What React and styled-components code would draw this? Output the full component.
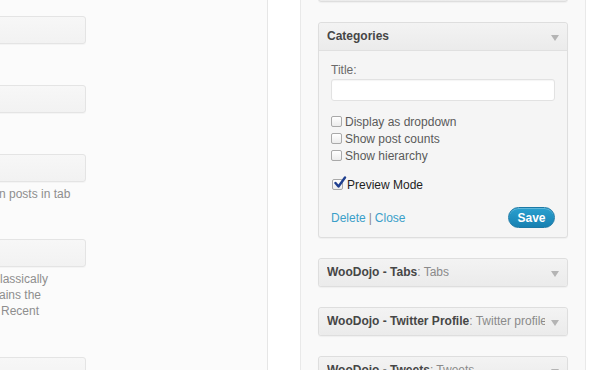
import React from "react"
import styled, { createGlobalStyle } from "styled-components"

const GlobalStyle = createGlobalStyle`
    body {
        margin:0;
        background:#fff;
        overflow:hidden;
        font-family:"Liberation Sans", Arial, sans-serif;
        font-size:12px;
    }
`

const widgets = [
    { title: "WooDojo - Tabs", sub: "Tabs" },
    { title: "WooDojo - Twitter Profile", sub: "Twitter profile" },
    { title: "WooDojo - Tweets", sub: "Tweets" },
]

const options = [
    { label: "Display as dropdown" },
    { label: "Show post counts" },
    { label: "Show hierarchy" },
]

function Arrow() {
    return (
        <ArrowIcon width="8" height="6" viewBox="0 0 8 6">
            <path d="M0 0 L8 0 L4 6 Z" fill="#b4b4b4" />
        </ArrowIcon>
    )
}

function Checkbox({ checked }) {
    return (
        <Box>
            {checked &&
                <svg width="14" height="14" viewBox="0 0 14 14">
                    <path d="M2.5 7 L5.5 10.5 L12 1.5" fill="none" stroke="#1f3f8f" strokeWidth="2.4" strokeLinecap="round" strokeLinejoin="round" />
                </svg>
            }
        </Box>
    )
}

export default class App extends React.Component {

    render(){
        return(
            <React.Fragment>
                <GlobalStyle />
                <Page>
                    <LeftPanel>
                        <FakeInput />
                        <FakeInput space={41} />
                        <FakeInput space={41} />
                        <Desc>
                            <Line shift={-1}>n posts in tab</Line>
                        </Desc>
                        <FakeInput space={37} />
                        <Desc>
                            <Line shift={0}>lassically</Line>
                            <Line shift={-1}>ains the</Line>
                            <Line shift={1}>Recent</Line>
                        </Desc>
                        <FakeInput space={38} />
                    </LeftPanel>

                    <Sidebar>
                        <Card top />

                        <Card>
                            <CardHeader>
                                <CardTitle>Categories</CardTitle>
                                <Arrow />
                            </CardHeader>
                            <CardBody>
                                <Label>Title:</Label>
                                <TextInput />
                                <Options>
                                    {options.map((o, i) => (
                                        <Option key={i}>
                                            <Checkbox />
                                            <span>{o.label}</span>
                                        </Option>
                                    ))}
                                </Options>
                                <Option strong>
                                    <Checkbox checked />
                                    <span>Preview Mode</span>
                                </Option>
                                <Actions>
                                    <Links>
                                        <Link>Delete</Link>
                                        <Sep>|</Sep>
                                        <Link>Close</Link>
                                    </Links>
                                    <SaveButton>Save</SaveButton>
                                </Actions>
                            </CardBody>
                        </Card>

                        {widgets.map((w, i) => (
                            <Card key={i}>
                                <CardHeader closed>
                                    <CardTitle>
                                        {w.title}<Sub>: {w.sub}</Sub>
                                    </CardTitle>
                                    <Arrow />
                                </CardHeader>
                            </Card>
                        ))}
                    </Sidebar>
                </Page>
            </React.Fragment>
        )
    }

}

const Page = styled.div`
    display:flex;
    align-items:stretch;
    height:370px;
    overflow:hidden;
`

const LeftPanel = styled.div`
    width:267px;
    flex:none;
    background:#fbfbfb;
    border-right:1px solid #e6e6e6;
    padding-top:16px;
    display:flex;
    flex-direction:column;
    overflow:hidden;
`

const FakeInput = styled.div`
    flex:none;
    margin-top:${p => p.space || 0}px;
    margin-left:-20px;
    width:104px;
    height:26px;
    border:1px solid #e4e4e4;
    border-radius:3px;
    background:linear-gradient(#f7f7f7, #f2f2f2);
    box-shadow:0 1px 1px rgba(0,0,0,0.03);
`

const Desc = styled.div`
    margin-top:4px;
    color:#8e8e8e;
    font-size:12px;
    line-height:16px;
`

const Line = styled.div`
    white-space:nowrap;
    margin-left:${p => p.shift}px;
`

const Sidebar = styled.div`
    margin-left:32px;
    width:250px;
    flex:none;
    padding:0 17px;
    background:#f9f9f9;
    border-left:1px solid #e9e9e9;
    border-right:1px solid #e9e9e9;
    display:flex;
    flex-direction:column;
    gap:20px;
`

const Card = styled.div`
    flex:none;
    border:1px solid #dedede;
    border-radius:3px;
    background:#f5f5f5;
    box-shadow:0 1px 1px rgba(0,0,0,0.04);
    ${p => p.top && `
        height:20px;
        margin-top:-20px;
        background:linear-gradient(#f1f1f1, #ececec);
    `}
`

const CardHeader = styled.div`
    height:27px;
    display:flex;
    align-items:center;
    justify-content:space-between;
    padding:0 8px 0 8px;
    background:linear-gradient(#f3f3f3, #ebebeb);
    border-bottom:${p => p.closed ? "none" : "1px solid #e0e0e0"};
    border-radius:${p => p.closed ? "3px" : "3px 3px 0 0"};
`

const CardTitle = styled.div`
    font-weight:bold;
    color:#464646;
    font-size:12px;
    line-height:14px;
    margin-top:-1px;
    white-space:nowrap;
    overflow:hidden;
    max-width:218px;
`

const Sub = styled.span`
    font-weight:normal;
    color:#8a8a8a;
`

const ArrowIcon = styled.svg`
    flex:none;
    margin-top:2px;
`

const CardBody = styled.div`
    padding:12px 12px 9px 12px;
    display:flex;
    flex-direction:column;
`

const Label = styled.div`
    color:#6a6a6a;
    line-height:14px;
    margin-bottom:2px;
`

const TextInput = styled.div`
    height:20px;
    background:#fff;
    border:1px solid #e2e2e2;
    border-radius:3px;
    box-shadow:inset 0 1px 1px rgba(0,0,0,0.04);
`

const Options = styled.div`
    margin-top:12px;
    display:flex;
    flex-direction:column;
`

const Option = styled.div`
    display:flex;
    align-items:center;
    gap:${p => p.strong ? "4px" : "3px"};
    height:17px;
    color:${p => p.strong ? "#1e1e1e" : "#5a5a5a"};
    margin-top:${p => p.strong ? "12px" : "0"};
    padding-left:${p => p.strong ? "1px" : "0"};
`

const Box = styled.div`
    position:relative;
    width:9px;
    height:9px;
    flex:none;
    border:1px solid #a9a9a9;
    border-radius:2px;
    background:linear-gradient(#fff, #ececec);

    svg {
        position:absolute;
        left:0;
        top:-4px;
    }
`

const Actions = styled.div`
    margin-top:14px;
    display:flex;
    align-items:center;
    justify-content:space-between;
`

const Links = styled.div`
    display:flex;
    align-items:center;
    gap:3px;
`

const Link = styled.a`
    color:#3a9fc9;
    cursor:pointer;
`

const Sep = styled.span`
    color:#8a8a8a;
`

const SaveButton = styled.button`
    width:47px;
    height:21px;
    border:1px solid #1b79a6;
    border-radius:11px;
    background:linear-gradient(#2aa0cf, #1780b1);
    color:#fff;
    font-family:"Liberation Sans", Arial, sans-serif;
    font-weight:bold;
    font-size:12px;
    padding:0;
    box-shadow:inset 0 1px 0 rgba(255,255,255,0.25);
`
